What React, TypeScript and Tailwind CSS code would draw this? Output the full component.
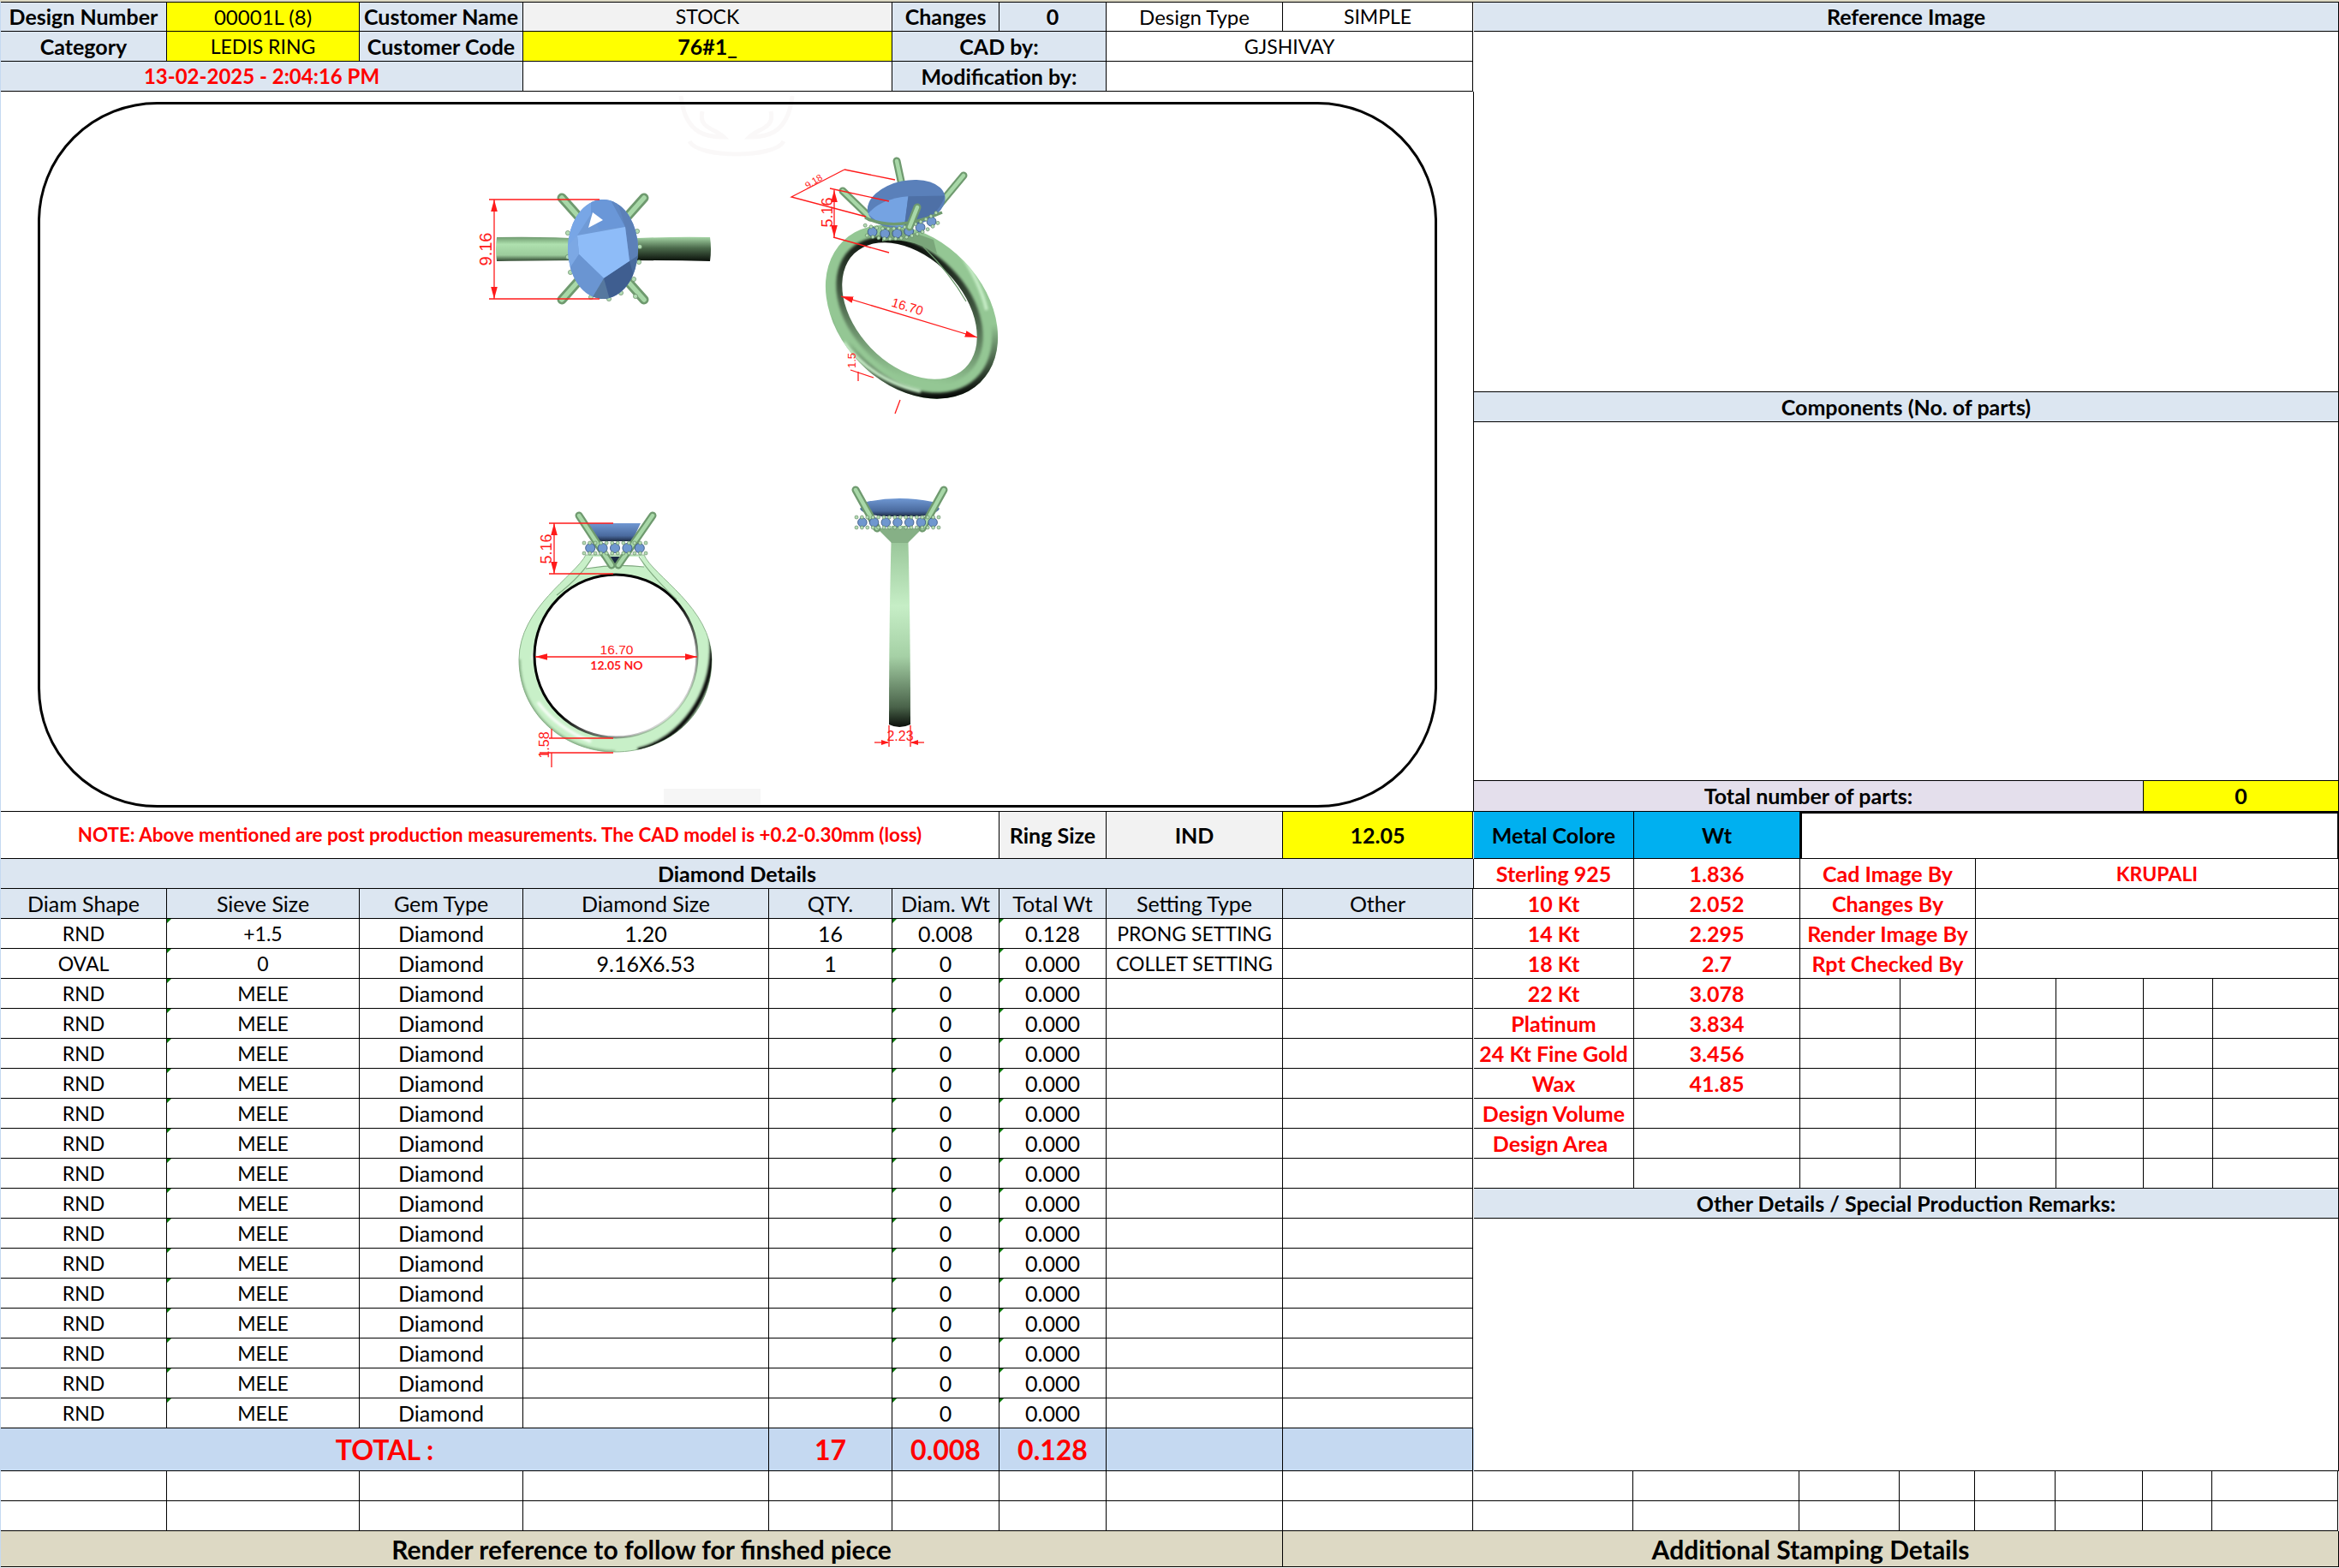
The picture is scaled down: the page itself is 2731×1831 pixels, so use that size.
import React from 'react';

type CellProps = { className?: string; children?: React.ReactNode; tick?: boolean };

const Cell = ({ className = '', children, tick }: CellProps) => (
  <div className={`relative flex items-center justify-center whitespace-nowrap border-r border-b border-black ${className}`}>
    {tick && <span className="absolute top-0 left-0 border-t-[5px] border-r-[5px] border-t-[#0b7a0b] border-r-transparent" />}
    {children}
  </div>
);

const blue = 'bg-[#dce6f1]';
const yellow = 'bg-[#ffff00]';
const caps = 'text-[23px]';
const tableCols = 'grid grid-cols-[194px_225px_191px_287px_144px_125px_125px_206px_222px] auto-rows-[35px]';
const rightCols = 'grid grid-cols-[187px_194px_117px_88px_94px_102px_81px_147px] auto-rows-[35px]';

const extraRows = Array.from({ length: 15 }, () => ['RND', 'MELE', 'Diamond', '', '', '0', '0.000', '', '']);
const rows = [
  ['RND', '+1.5', 'Diamond', '1.20', '16', '0.008', '0.128', 'PRONG SETTING', ''],
  ['OVAL', '0', 'Diamond', '9.16X6.53', '1', '0', '0.000', 'COLLET SETTING', ''],
  ...extraRows,
];

const metals = [
  ['Sterling 925', '1.836', 'Cad Image By', 'KRUPALI'],
  ['10 Kt', '2.052', 'Changes By', ''],
  ['14 Kt', '2.295', 'Render Image By', ''],
  ['18 Kt', '2.7', 'Rpt Checked By', ''],
];
const metalsMore = [
  ['22 Kt', '3.078'],
  ['Platinum', '3.834'],
  ['24 Kt Fine Gold', '3.456'],
  ['Wax', '41.85'],
  ['Design Volume', ''],
  ['Design Area', ''],
  ['', ''],
];

const Prong = ({ x1, y1, x2, y2, w = 9 }: { x1: number; y1: number; x2: number; y2: number; w?: number }) => (
  <g strokeLinecap="round" fill="none">
    <line x1={x1} y1={y1} x2={x2} y2={y2} stroke="#6f9a6f" strokeWidth={w} />
    <line x1={x1} y1={y1} x2={x2} y2={y2} stroke="#a8d8a8" strokeWidth={w * 0.5} />
  </g>
);

const Dim = ({ d, ends = false }: { d: string; ends?: boolean }) => (
  <path d={d} fill="none" stroke="#ff1a1a" strokeWidth="1.3" markerStart={ends ? 'url(#arrowS)' : undefined} markerEnd={ends ? 'url(#arrowE)' : undefined} />
);

const Label = ({ x, y, size, rotate = 0, children }: { x: number; y: number; size: number; rotate?: number; children: React.ReactNode }) => (
  <text x={x} y={y} fontSize={size} fill="#ff1a1a" fontFamily="Liberation Sans, sans-serif" textAnchor="middle" transform={`rotate(${rotate} ${x} ${y})`}>
    {children}
  </text>
);

// row of small set stones with beads above and below
const Halo = ({ x1, x2, y, bow = 0, n = 5 }: { x1: number; x2: number; y: number; bow?: number; n?: number }) => {
  const at = (t: number) => [x1 + (x2 - x1) * t, y + bow * (1 - (2 * t - 1) * (2 * t - 1))];
  const stones = Array.from({ length: n }, (_, i) => at((i + 0.5) / n));
  const beads = Array.from({ length: n * 2 + 2 }, (_, i) => at(i / (n * 2 + 1)));
  return (
    <g>
      {stones.map(([cx, cy], i) => (
        <circle key={i} cx={cx} cy={cy} r={(x2 - x1) / n / 2.6} fill="#6f97cf" stroke="#34507c" strokeWidth="0.8" />
      ))}
      {beads.map(([cx, cy], i) => (
        <g key={i}>
          <circle cx={cx} cy={cy - 6} r="2" fill="#b4dcb4" stroke="#5b805b" strokeWidth="0.6" />
          <circle cx={cx} cy={cy + 6} r="2" fill="#b4dcb4" stroke="#5b805b" strokeWidth="0.6" />
        </g>
      ))}
    </g>
  );
};

const facetsTop: [string, string][] = [
  ['660,232 704,232 690,250 674,275 660,300', '#78a6e6'],
  ['690,232 748,232 730,265 700,268 690,250', '#6a97d8'],
  ['712,232 748,232 730,265', '#5f87c2'],
  ['730,265 720,232 750,240 750,300 735,305', '#5c80b8'],
  ['735,305 750,295 750,345 725,335 705,325', '#4a6c9e'],
  ['674,275 730,265 735,305 705,325 676,297', '#8ebcf8'],
  ['660,290 674,275 676,297 662,318', '#7ca8e4'],
  ['662,318 676,297 705,325 690,350 660,340', '#6a95d2'],
  ['705,325 735,305 748,350 700,350', '#3f5e90'],
  ['690,350 705,325 712,350', '#56789f'],
];

const RingDrawing = () => (
  <svg viewBox="1 107 1719 840" className="block w-[1719px] h-[840px]">
    <defs>
      <marker id="arrowE" markerWidth="12" markerHeight="8" refX="11" refY="4" orient="auto">
        <path d="M0 1 L11 4 L0 7Z" fill="#ff1a1a" />
      </marker>
      <marker id="arrowS" markerWidth="12" markerHeight="8" refX="1" refY="4" orient="auto">
        <path d="M12 1 L1 4 L12 7Z" fill="#ff1a1a" />
      </marker>
      <linearGradient id="bandLeft" x1="0" y1="0" x2="0" y2="1">
        <stop offset="0" stopColor="#6f9a6f" />
        <stop offset="0.3" stopColor="#aee0ae" />
        <stop offset="0.75" stopColor="#9ccc9c" />
        <stop offset="1" stopColor="#2f452f" />
      </linearGradient>
      <linearGradient id="bandRight" x1="0" y1="0" x2="0" y2="1">
        <stop offset="0" stopColor="#a5d5a5" />
        <stop offset="0.45" stopColor="#4c6b4c" />
        <stop offset="1" stopColor="#0a100a" />
      </linearGradient>
      <linearGradient id="gemDark" x1="0" y1="0" x2="0" y2="1">
        <stop offset="0" stopColor="#6f97d2" />
        <stop offset="0.7" stopColor="#4a6a9e" />
        <stop offset="1" stopColor="#1c2a44" />
      </linearGradient>
      <linearGradient id="shank" x1="0" y1="0" x2="0" y2="1">
        <stop offset="0" stopColor="#8fbd8f" />
        <stop offset="0.4" stopColor="#c6eec6" />
        <stop offset="0.65" stopColor="#a5d0a5" />
        <stop offset="0.9" stopColor="#4a634a" />
        <stop offset="1" stopColor="#0a0f0a" />
      </linearGradient>
      <linearGradient id="ringDarkIn" gradientUnits="userSpaceOnUse" x1="625" y1="680" x2="790" y2="850">
        <stop offset="0" stopColor="#000" />
        <stop offset="0.55" stopColor="#000" />
        <stop offset="1" stopColor="#000" stopOpacity="0" />
      </linearGradient>
      <linearGradient id="ring2Dark" gradientUnits="userSpaceOnUse" x1="985" y1="300" x2="1090" y2="440">
        <stop offset="0" stopColor="#000" />
        <stop offset="0.5" stopColor="#000" stopOpacity="0.55" />
        <stop offset="1" stopColor="#000" stopOpacity="0" />
      </linearGradient>
      <linearGradient id="ring2Out" gradientUnits="userSpaceOnUse" x1="1100" y1="360" x2="1165" y2="410">
        <stop offset="0" stopColor="#000" stopOpacity="0" />
        <stop offset="1" stopColor="#000" />
      </linearGradient>
      <filter id="soft"><feGaussianBlur stdDeviation="1.6" /></filter>
      <clipPath id="gemTop"><ellipse cx="704" cy="291" rx="41" ry="58" /></clipPath>
      <clipPath id="r2Outer"><ellipse cx="1064.5" cy="364" rx="115" ry="85" transform="rotate(46 1064.5 364)" /></clipPath>
      <clipPath id="r3Outer"><path d="M684 648 C672 672 606 710 606 770 C606 835 660 878 718 878 C780 878 831 835 831 770 C831 710 762 672 752 648Z" /></clipPath>
    </defs>

    {/* watermark */}
    <g fill="none" stroke="#faf8f8" strokeWidth="5">
      <path d="M795 112 C800 160 830 160 845 160 C835 150 815 150 820 130" />
      <path d="M925 112 C920 160 890 160 875 160 C885 150 905 150 900 130" />
      <path d="M805 165 C815 185 905 185 915 165" />
      <path d="M775 930 L888 930" strokeWidth="18" stroke="#f6f6f6" />
    </g>

    <rect x="45.5" y="120.5" width="1631" height="821" rx="138" fill="none" stroke="#000" strokeWidth="3" />

    {/* top view */}
    <path d="M580 277 Q640 276 682 279 L682 304 Q640 304 580 305 Q578 291 580 277Z" fill="url(#bandLeft)" />
    <path d="M726 279 Q780 276 829 277 Q831 291 829 305 Q780 304 726 304Z" fill="url(#bandRight)" />
    <Prong x1={656} y1={231} x2={680} y2={258} w={11} />
    <Prong x1={752} y1={231} x2={728} y2={258} w={11} />
    <Prong x1={656} y1={350} x2={680} y2={323} w={11} />
    <Prong x1={752} y1={350} x2={728} y2={323} w={11} />
    <g fill="#b4dcb4" stroke="#5b805b" strokeWidth="0.6">
      {[[663, 272], [663, 300], [666, 318], [744, 270], [747, 288], [746, 306], [740, 326], [742, 346], [690, 347], [711, 349], [725, 342]].map(([cx, cy]) => (
        <circle key={`${cx}-${cy}`} cx={cx} cy={cy} r="2.6" />
      ))}
    </g>
    <ellipse cx="704" cy="291" rx="41" ry="58" fill="#6f9ad6" />
    <g clipPath="url(#gemTop)">
      {facetsTop.map(([pts, fill]) => (
        <polygon key={pts} points={pts} fill={fill} />
      ))}
      <polygon points="692,248 704,257 687,266" fill="#fff" />
    </g>
    <Dim d="M571 233 H700" />
    <Dim d="M571 349 H700" />
    <Dim d="M577 233 V349" ends />
    <Label x={574} y={291} size={20} rotate={-90}>9.16</Label>

    {/* perspective view */}
    <ellipse cx="1064.5" cy="364" rx="115" ry="85" transform="rotate(46 1064.5 364)" fill="#94c794" />
    <g clipPath="url(#r2Outer)" fill="none">
      <ellipse cx="1064.5" cy="364" rx="115" ry="85" transform="rotate(46 1064.5 364)" stroke="url(#ring2Out)" strokeWidth="14" filter="url(#soft)" />
      <path d="M968 372 Q985 430 1060 466" stroke="#6f9a6f" strokeWidth="5" filter="url(#soft)" />
      <path d="M985 400 Q1020 445 1075 457 M1118 290 Q1145 330 1152 362" stroke="#c9efc9" strokeWidth="4" filter="url(#soft)" />
    </g>
    <ellipse cx="1062" cy="363" rx="93" ry="62.6" transform="rotate(46 1062 363)" fill="none" stroke="url(#ring2Dark)" strokeWidth="14" filter="url(#soft)" />
    <ellipse cx="1062" cy="363" rx="93" ry="62.6" transform="rotate(46 1062 363)" fill="#fff" />
    <path d="M1078 288 Q1110 320 1128 352" fill="none" stroke="#6f9a6f" strokeWidth="1.2" />
    <path d="M1030 262 Q1058 268 1090 280 L1094 296 Q1060 276 1030 282Z" fill="#7aa67a" />
    <Prong x1={1047} y1={188} x2={1053} y2={216} w={9} />
    <Prong x1={1125} y1={205} x2={1096} y2={240} w={9} />
    <Prong x1={984} y1={223} x2={1016} y2={254} w={9} />
    <g transform="rotate(-12 1058 237)">
      <ellipse cx="1058" cy="238" rx="46" ry="27" fill="#5a80ba" />
      <path d="M1012 240 Q1030 226 1062 230 L1050 264 Q1022 258 1012 240Z" fill="#75a3e2" />
      <path d="M1062 230 L1104 238 Q1090 264 1050 264Z" fill="#4e70a6" />
    </g>
    <path d="M1010 254 Q1045 272 1100 248" fill="none" stroke="#6f9a6f" strokeWidth="3.5" />
    <g transform="rotate(-10 1052 270)">
      <Halo x1={1012} x2={1096} y={262} bow={10} n={6} />
    </g>
    <Prong x1={1071} y1={242} x2={1062} y2={265} w={9} />
    <Dim d="M986 198 L1045 210" />
    <Dim d="M986 198 L924 230 L1011 253" />
    <Dim d="M969 220 L1038 235" />
    <Dim d="M973 277 L1038 295" />
    <Dim d="M974 222 V277" ends />
    <Dim d="M982 346 L1141 394" ends />
    <Dim d="M993 432 L1020 441" />
    <Dim d="M1002 445 V434 M1051 467 L1045 483" />
    <Label x={972} y={248} size={18} rotate={-90}>5.16</Label>
    <Label x={952} y={215} size={11} rotate={-32}>9.18</Label>
    <Label x={1058} y={363} size={15} rotate={17}>16.70</Label>
    <Label x={999} y={421} size={13} rotate={-90}>1.5</Label>

    {/* front view */}
    <path fill="#c8f0c8" stroke="#8fb58f" strokeWidth="1" d="M684 648 C672 672 606 710 606 770 C606 835 660 878 718 878 C780 878 831 835 831 770 C831 710 762 672 752 648Z" />
    <g clipPath="url(#r3Outer)" fill="none">
      <path d="M831 745 C836 810 795 865 745 876" stroke="#000" strokeWidth="5" filter="url(#soft)" />
      <path d="M606 770 C606 835 660 878 718 878" stroke="#7fa87f" strokeWidth="3" filter="url(#soft)" />
      <path d="M668 690 Q635 720 622 770 M628 820 Q650 850 690 866" stroke="#fff" strokeWidth="3" filter="url(#soft)" />
    </g>
    <circle cx="719" cy="766" r="95" fill="#fff" stroke="url(#ringDarkIn)" strokeWidth="3" />
    <path d="M691 650 L748 650 L752 662 Q718 658 684 664Z" fill="#fff" />
    <path d="M684 664 Q718 658 752 662 M692 650 Q680 672 650 695 M746 650 Q760 672 790 700" fill="none" stroke="#7fa87f" strokeWidth="1.2" />
    <path d="M702 650 L716 662 L734 650Z" fill="#1c2a44" />
    <path d="M687 611 H748 L738 632 H697Z" fill="url(#gemDark)" />
    <Prong x1={676} y1={602} x2={714} y2={660} w={9} />
    <Prong x1={762} y1={602} x2={722} y2={660} w={9} />
    <Halo x1={682} x2={754} y={640} n={5} />
    <Dim d="M641 611 H716" />
    <Dim d="M641 670 H716" />
    <Dim d="M647 611 V670" ends />
    <Label x={644} y={641} size={18} rotate={-90}>5.16</Label>
    <Dim d="M625 767 H814" ends />
    <Label x={720} y={764} size={15.5}>16.70</Label>
    <text x={720} y={782} fontSize="14" fontWeight="700" fill="#ff1a1a" fontFamily="Lato, sans-serif" textAnchor="middle">12.05 NO</text>
    <Dim d="M641 862 H716" />
    <Dim d="M630 879 H716" />
    <Dim d="M644 851 V862 M644 879 V896" />
    <Label x={641} y={870} size={16} rotate={-90}>1.58</Label>

    {/* side view */}
    <path d="M1041 614 H1060 Q1063 720 1063 846 Q1050 852 1038 846 Q1038 720 1041 614Z" fill="url(#shank)" />
    <path d="M1024 617 L1077 617 L1060 634 H1041Z" fill="#86b086" />
    <path d="M1012 586 Q1050 578 1089 586 L1097 594 Q1092 602 1070 603 H1030 Q1006 600 1004 594Z" fill="url(#gemDark)" />
    <Prong x1={999} y1={572} x2={1024} y2={617} w={9} />
    <Prong x1={1102} y1={572} x2={1077} y2={617} w={9} />
    <Halo x1={1000} x2={1096} y={610} n={7} />
    <circle cx="1051" cy="616" r="2" fill="#b4dcb4" />
    <Dim d="M1038 847 V872 M1063 847 V872" />
    <Dim d="M1021 867 H1037" />
    <path d="M1029 864 L1038 867 L1029 870Z M1072 864 L1063 867 L1072 870Z" fill="#ff1a1a" />
    <Dim d="M1079 867 H1064" />
    <Label x={1051} y={865} size={16}>2.23</Label>
  </svg>
);

export default function App() {
  return (
    <div className="w-[2731px] h-[1831px] bg-white text-black text-[25px] leading-none border-l border-l-[#c5d9f1] [font-family:Lato,sans-serif]">
      <div className="h-[2px] bg-[#ddd9c4] -ml-px" />
      <div className="flex border-t border-black">
        {/* left side */}
        <div className="w-[1720px] flex flex-col">
          <div className="grid grid-cols-[194px_225px_191px_431px_125px_125px_206px_222px] grid-rows-[34px_35px_35px]">
            <Cell className={`${blue} font-bold`}>Design Number</Cell>
            <Cell className={`${yellow} text-[24px]`}>00001L (8)</Cell>
            <Cell className={`${blue} font-bold`}>Customer Name</Cell>
            <Cell className={`bg-[#f2f2f2] ${caps}`}>STOCK</Cell>
            <Cell className={`${blue} font-bold`}>Changes</Cell>
            <Cell className={`${blue} font-bold`}>0</Cell>
            <Cell className="text-[24px]">Design Type</Cell>
            <Cell className={caps}>SIMPLE</Cell>
            <Cell className={`${blue} font-bold`}>Category</Cell>
            <Cell className={`${yellow} ${caps}`}>LEDIS RING</Cell>
            <Cell className={`${blue} font-bold`}>Customer Code</Cell>
            <Cell className={`${yellow} font-bold`}>76#1_</Cell>
            <Cell className={`${blue} font-bold col-span-2`}>CAD by:</Cell>
            <Cell className={`col-span-2 ${caps}`}>GJSHIVAY</Cell>
            <Cell className={`${blue} col-span-3 font-bold text-[24px] text-[#ff0000]`}>13-02-2025 - 2:04:16 PM</Cell>
            <Cell />
            <Cell className={`${blue} font-bold col-span-2`}>Modification by:</Cell>
            <Cell className="col-span-2" />
          </div>
          <div className="h-[841px] border-r border-b border-black">
            <RingDrawing />
          </div>
          <div className="grid grid-cols-[1166px_125px_206px_222px] h-[55px]">
            <Cell className="font-bold text-[#ff0000] text-[22.4px]">NOTE: Above mentioned are post production measurements. The CAD model is +0.2-0.30mm (loss)</Cell>
            <Cell className="bg-[#f2f2f2] font-bold">Ring Size</Cell>
            <Cell className="bg-[#f2f2f2] font-bold">IND</Cell>
            <Cell className={`${yellow} font-bold`}>12.05</Cell>
          </div>
          <Cell className={`${blue} font-bold h-[35px]`}>Diamond Details</Cell>
          <div className={tableCols}>
            {['Diam Shape', 'Sieve Size', 'Gem Type', 'Diamond Size', 'QTY.', 'Diam. Wt', 'Total Wt', 'Setting Type', 'Other'].map((h) => (
              <Cell key={h} className={blue}>{h}</Cell>
            ))}
            {rows.map((row, r) =>
              row.map((v, c) => (
                <Cell key={`${r}-${c}`} tick={c === 1 || c === 5 || c === 6} className={c === 0 || c === 1 || c === 7 ? caps : ''}>
                  {v}
                </Cell>
              )),
            )}
          </div>
          <div className="grid grid-cols-[897px_144px_125px_125px_206px_222px] h-[50px] bg-[#c5d9f1] text-[#ff0000] font-bold text-[32px]">
            <Cell>TOTAL :</Cell>
            <Cell>17</Cell>
            <Cell>0.008</Cell>
            <Cell>0.128</Cell>
            <Cell />
            <Cell />
          </div>
        </div>

        {/* right side */}
        <div className="w-[1010px] flex flex-col">
          <Cell className={`${blue} font-bold h-[34px]`}>Reference Image</Cell>
          <Cell className="h-[421px]" />
          <Cell className={`${blue} font-bold h-[35px]`}>Components (No. of parts)</Cell>
          <Cell className="h-[419px]" />
          <div className="grid grid-cols-[782px_228px] h-[36px] font-bold">
            <Cell className="bg-[#e4dfec]">Total number of parts:</Cell>
            <Cell className={yellow}>0</Cell>
          </div>
          <div className="grid grid-cols-[187px_194px_629px] h-[55px] font-bold">
            <Cell className="bg-[#00b0f0]">Metal Colore</Cell>
            <Cell className="bg-[#00b0f0]">Wt</Cell>
            <Cell className="border-t-2 border-l-2 border-r-2" />
          </div>
          <div className={`${rightCols} font-bold text-[#ff0000]`}>
            {metals.map(([a, b, c, d]) => (
              <React.Fragment key={a}>
                <Cell>{a}</Cell>
                <Cell>{b}</Cell>
                <Cell className="col-span-2">{c}</Cell>
                <Cell className={`col-span-4 ${caps}`}>{d}</Cell>
              </React.Fragment>
            ))}
            {metalsMore.map(([a, b], r) => (
              <React.Fragment key={r}>
                <Cell className={a === 'Design Area' ? 'pr-[8px]' : ''}>{a}</Cell>
                <Cell>{b}</Cell>
                <Cell />
                <Cell />
                <Cell />
                <Cell />
                <Cell />
                <Cell />
              </React.Fragment>
            ))}
          </div>
          <Cell className={`${blue} font-bold h-[35px]`}>Other Details / Special Production Remarks:</Cell>
          <Cell className="h-[295px]" />
        </div>
      </div>

      {/* spare rows and footer */}
      <div className="grid grid-cols-[194px_225px_191px_287px_144px_125px_125px_206px_222px_187px_194px_117px_88px_94px_102px_81px_147px] auto-rows-[35px]">
        {Array.from({ length: 34 }, (_, i) => (
          <Cell key={i} />
        ))}
      </div>
      <div className="grid grid-cols-[1497px_1233px] h-[42px] bg-[#ddd9c4] font-bold text-[30px]">
        <Cell>Render reference to follow for finshed piece</Cell>
        <Cell>Additional Stamping Details</Cell>
      </div>
    </div>
  );
}
